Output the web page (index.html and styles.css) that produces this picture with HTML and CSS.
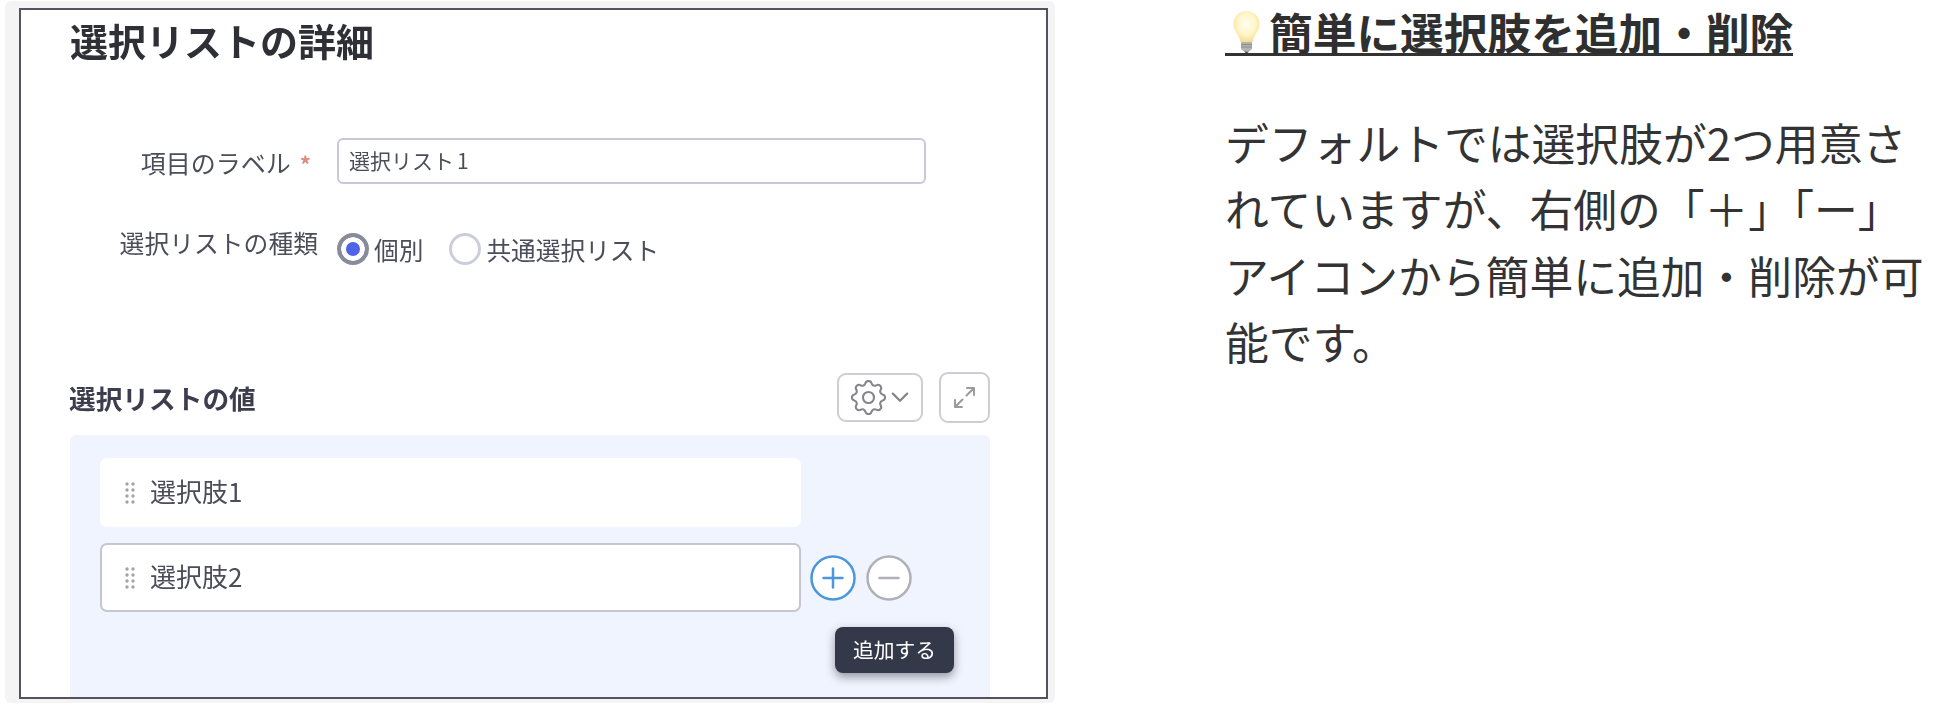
FILE: index.html
```html
<!DOCTYPE html>
<html lang="ja">
<head>
<meta charset="utf-8">
<title>選択リストの詳細</title>
<link rel="stylesheet" href="styles.css">
</head>
<body>
<main class="page">
  <section class="shot">
    <div class="frame">
      <h1 class="title">選択リストの詳細</h1>
      <div class="form">
        <div class="label">項目のラベル<span class="req">*</span></div>
        <div class="input">選択リスト<span class="digit">1</span></div>
        <div class="label label-up">選択リストの種類</div>
        <div class="radios">
          <span class="radio radio-on"></span><span class="radio-text">個別</span>
          <span class="radio radio-off"></span><span class="radio-text">共通選択リスト</span>
        </div>
      </div>
      <div class="head">
        <h2 class="subtitle">選択リストの値</h2>
        <div class="tools">
          <button class="tool tool-gear">
            <svg class="gear" viewBox="2.5 2.5 19 19" fill="none" stroke="#85858c" stroke-width="1.15" stroke-linejoin="round"><path d="M10.325 4.317c.426-1.756 2.924-1.756 3.35 0a1.724 1.724 0 002.573 1.066c1.543-.94 3.31.826 2.37 2.37a1.724 1.724 0 001.065 2.572c1.756.426 1.756 2.924 0 3.35a1.724 1.724 0 00-1.066 2.573c.94 1.543-.826 3.31-2.37 2.37a1.724 1.724 0 00-2.572 1.065c-.426 1.756-2.924 1.756-3.35 0a1.724 1.724 0 00-2.573-1.066c-1.543.94-3.31-.826-2.37-2.37a1.724 1.724 0 00-1.065-2.572c-1.756-.426-1.756-2.924 0-3.35a1.724 1.724 0 001.066-2.573c-.94-1.543.826-3.31 2.37-2.37.996.608 2.296.07 2.572-1.065z"/><circle cx="12" cy="12" r="3"/></svg>
            <svg class="chev" viewBox="0 0 16 10" fill="none" stroke="#85858c" stroke-width="2" stroke-linecap="round" stroke-linejoin="round"><path d="M1.5 1.5 8 8l6.5-6.5"/></svg>
          </button>
          <button class="tool tool-expand">
            <svg class="expand" viewBox="0 0 23 23" fill="none" stroke="#9a9aa0" stroke-width="2" stroke-linecap="round" stroke-linejoin="round"><path d="M14 2h7v7M21 2l-7.500 7.500M2 14v7h7M2 21l7.500-7.500"/></svg>
          </button>
        </div>
      </div>
      <div class="values">
        <div class="row">
          <svg class="grip" viewBox="0 0 10 22" fill="#a3a3a8"><circle cx="2" cy="2" r="1.700"/><circle cx="8" cy="2" r="1.700"/><circle cx="2" cy="8" r="1.700"/><circle cx="8" cy="8" r="1.700"/><circle cx="2" cy="14" r="1.700"/><circle cx="8" cy="14" r="1.700"/><circle cx="2" cy="20" r="1.700"/><circle cx="8" cy="20" r="1.700"/></svg>
          <span class="row-text">選択肢1</span>
        </div>
        <div class="row-wrap">
          <div class="row row-active">
            <svg class="grip" viewBox="0 0 10 22" fill="#a3a3a8"><circle cx="2" cy="2" r="1.700"/><circle cx="8" cy="2" r="1.700"/><circle cx="2" cy="8" r="1.700"/><circle cx="8" cy="8" r="1.700"/><circle cx="2" cy="14" r="1.700"/><circle cx="8" cy="14" r="1.700"/><circle cx="2" cy="20" r="1.700"/><circle cx="8" cy="20" r="1.700"/></svg>
            <span class="row-text">選択肢2</span>
          </div>
          <svg class="round" viewBox="0 0 46 46" fill="#fff" stroke="#4a97dd" stroke-width="2.500" stroke-linecap="round"><circle cx="23" cy="23" r="21.500"/><path d="M13.500 23h19M23 13.500v19"/></svg>
          <svg class="round" viewBox="0 0 46 46" fill="#fff" stroke="#b0b1b7" stroke-width="2.500" stroke-linecap="round"><circle cx="23" cy="23" r="21.500"/><path d="M13.500 23h19"/></svg>
        </div>
        <div class="tooltip">追加する</div>
      </div>
    </div>
  </section>
  <section class="note">
    <h2 class="note-title"><svg class="bulb" viewBox="0 0 27 42"><defs><radialGradient id="glow" cx="50%" cy="42%" r="58%"><stop offset="0" stop-color="#fffef4"/><stop offset=".6" stop-color="#fff6c8"/><stop offset="1" stop-color="#f6dd92"/></radialGradient></defs><path d="M13.500 0C6 0 .5 5.800.5 13c0 7 6 11 7 18h12c1-7 7-11 7-18C26.500 5.800 21 0 13.500 0z" fill="url(#glow)"/><path d="M8 31h11v7l-3 2.500h-5L8 38z" fill="#b4b4ae"/><path d="M8 33.500h11M8 36h11" stroke="#8d8d88"/><path d="M11 40.500h5L14.500 42h-2z" fill="#55555a"/></svg><span>簡単に選択肢を追加・削除</span></h2>
    <p class="note-body">デフォルトでは選択肢が2つ用意さ<br>れていますが、右側の「＋」「ー」<br>アイコンから簡単に追加・削除が可<br>能です。</p>
  </section>
</main>
</body>
</html>
```
FILE: styles.css
```css
* { box-sizing: border-box; }
html, body { margin: 0; padding: 0; background: #fff; }
body { font-family: "Noto Sans CJK JP", "Noto Sans", sans-serif; color: #333; overflow: hidden; }
.page { display: flex; align-items: flex-start; width: 1948px; height: 708px; }

.shot { width: 1050px; height: 702px; margin: 1px 0 0 5px; padding: 7px 7px 4px 14px; background: #f4f4f5; border-radius: 6px; flex: none; }
.frame { width: 1029px; height: 691px; border: 2px solid #56505f; background: #fff; padding: 0 56px 0 49px; overflow: hidden; filter: blur(.45px); display: flex; flex-direction: column; }
.title { margin: 8px 0 0; font-size: 38px; line-height: 44px; font-weight: 700; color: #2f3036; }

.form { display: grid; grid-template-columns: 248px 589px; column-gap: 19px; row-gap: 46px; margin-top: 76px; }
.label { font-size: 25px; line-height: 48px; text-align: right; color: #4b4d5a; white-space: nowrap; padding-right: 7px; }
.label-up { padding-right: 0; font-size: 24.800px; line-height: 24px; margin-top: -3px; }
.req { color: #e08a80; font-size: 22px; font-weight: 700; margin-left: 9px; }
.input { height: 46px; border: 2px solid #c8c9d8; border-radius: 6px; padding-left: 10px; font-size: 21px; line-height: 40px; color: #4b4d5a; }
.digit { margin-left: 3px; }
.radios { display: flex; align-items: center; height: 32px; font-size: 24.700px; color: #4b4d5a; }
.radio { width: 32px; height: 32px; border-radius: 50%; flex: none; background: #fff; }
.radio-on { border: 4px solid #8a8b98; display: flex; box-shadow: inset 0 0 0 5px #fff; background: #4f63e6; }
.radio-off { border: 3px solid #cdcdda; }
.radio-text { margin-left: 5px; margin-right: 26px; line-height: 32px; }

.head { display: flex; justify-content: space-between; align-items: center; height: 51px; margin-top: 107px; }
.subtitle { margin: 0 0 0 -1px; font-size: 26.700px; line-height: 36px; font-weight: 700; color: #3c3e4e; }
.tools { display: flex; align-items: center; gap: 16px; }
.tool { background: #fff; border: 2px solid #cdcdd8; border-radius: 9px; padding: 0; display: flex; align-items: center; justify-content: center; }
.tool-gear { width: 86px; height: 49px; gap: 6px; }
.tool-expand { width: 51px; height: 51px; }
.gear { width: 35px; height: 35px; }
.chev { width: 18px; height: 11px; margin-left: -1px; }
.expand { width: 23px; height: 23px; }

.values { position: relative; flex: 1; margin-top: 12px; background: #f0f4fe; border-radius: 6px 6px 0 0; padding: 23px 30px; display: flex; flex-direction: column; gap: 16px; }
.row { width: 701px; height: 69px; background: #fff; border-radius: 7px; display: flex; align-items: center; padding-left: 25px; flex: none; }
.row-active { border: 2px solid #c5c6d2; padding-left: 23px; }
.grip { width: 10px; height: 22px; flex: none; }
.row-text { margin-left: 15px; font-size: 26px; line-height: 36px; color: #4b4d5a; margin-top: -3px; }
.row-wrap { display: flex; align-items: center; gap: 10px; }
.row-wrap .row { margin-right: -1px; }
.round { width: 46px; height: 46px; flex: none; }
.tooltip { position: absolute; left: 765px; top: 192px; width: 119px; height: 46px; border-radius: 8px; background: #333949; color: #fff; font-size: 20.800px; line-height: 44px; text-align: center; box-shadow: 0 4px 10px rgba(30, 35, 50, .45); }

.note { margin-left: 170px; width: 720px; flex: none; }
.note-title { display: flex; width: fit-content; margin: 8px 0 0; height: 48px; border-bottom: 3px solid #333; font-size: 43.700px; line-height: 47px; font-weight: 700; color: #2f2f2f; white-space: nowrap; }
.bulb { width: 27px; height: 42px; flex: none; margin: 3px 9px 0 8px; }
.note-body { margin: 53px 0 0; font-size: 43.800px; line-height: 66.400px; color: #333; white-space: nowrap; }
```
